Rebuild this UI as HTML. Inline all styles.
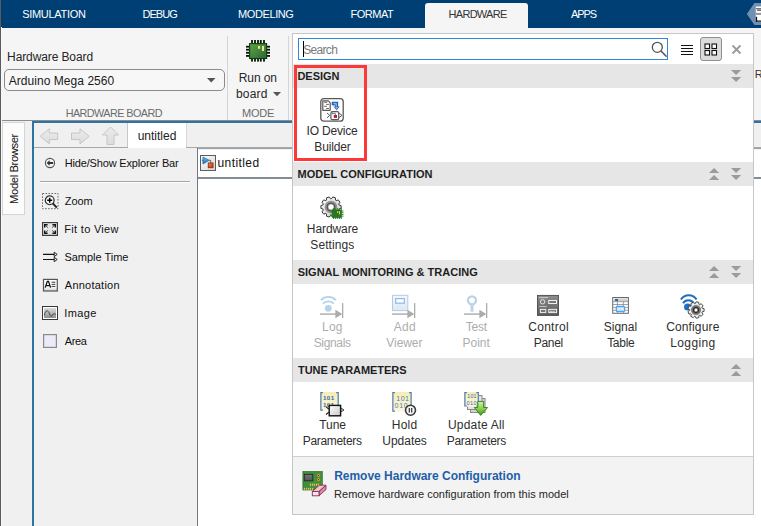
<!DOCTYPE html>
<html><head><meta charset="utf-8"><style>
html,body{margin:0;padding:0;}
body{width:761px;height:526px;overflow:hidden;position:relative;font-family:"Liberation Sans",sans-serif;}
body>div,body>svg{position:absolute;}
.t{white-space:nowrap;line-height:1;}
</style></head><body>
<div style="left:0px;top:0px;width:761px;height:526px;background:#f5f5f5"></div>
<div style="left:0px;top:0px;width:761px;height:28px;background:#003f74"></div>
<div style="left:425px;top:3px;width:103px;height:25px;background:#f5f5f5;border-radius:3px 3px 0 0"></div>
<div class="t" style="left:22.16px;top:8.59px;font-size:11px;letter-spacing:-0.303px;color:#fff;">SIMULATION</div>
<div class="t" style="left:142.47px;top:8.59px;font-size:11px;letter-spacing:-0.957px;color:#fff;">DEBUG</div>
<div class="t" style="left:238.07px;top:8.59px;font-size:11px;letter-spacing:-0.403px;color:#fff;">MODELING</div>
<div class="t" style="left:350.57px;top:8.59px;font-size:11px;letter-spacing:-0.504px;color:#fff;">FORMAT</div>
<div class="t" style="left:448.57px;top:8.59px;font-size:11px;letter-spacing:-0.718px;color:#333;">HARDWARE</div>
<div class="t" style="left:570.97px;top:8.59px;font-size:11px;letter-spacing:-1.102px;color:#fff;">APPS</div>
<svg style="left:745px;top:0px" width="16" height="28" viewBox="0 0 16 28"><polygon points="1.8,14 9.5,3 16,3 16,25 9.5,25" fill="#6f90b2"/><rect x="10.8" y="6.5" width="5.2" height="15.2" fill="#fff"/><rect x="10.8" y="8" width="5.2" height="1.2" fill="#777"/><rect x="12" y="9.6" width="4" height="1.1" fill="#333"/><rect x="10.8" y="12.8" width="5.2" height="2.2" fill="#999"/><rect x="10.8" y="16.8" width="1.3" height="4.9" fill="#111"/><rect x="10.8" y="20.5" width="5.2" height="1.2" fill="#111"/></svg>
<div class="t" style="left:7.11px;top:50.84px;font-size:12px;letter-spacing:-0.110px;color:#262626;">Hardware Board</div>
<div style="left:4px;top:69px;width:219px;height:20px;border:1px solid #8a8a8a;border-radius:5px;background:#f7f7f7"></div>
<div class="t" style="left:8.78px;top:74.84px;font-size:12px;letter-spacing:0.044px;color:#1a1a1a;">Arduino Mega 2560</div>
<svg style="left:207px;top:78px" width="9" height="5" viewBox="0 0 9 5"><polygon points="0,0 8.5,0 4.25,4.5" fill="#555"/></svg>
<div class="t" style="left:65.67px;top:108.06px;font-size:10.8px;letter-spacing:-0.554px;color:#6b6b6b;">HARDWARE BOARD</div>
<div style="left:227px;top:36px;width:1px;height:84px;background:#d4d4d4"></div>
<div style="left:288px;top:36px;width:1px;height:84px;background:#d4d4d4"></div>
<svg style="left:242px;top:36px" width="32" height="30" viewBox="0 0 32 30"><g><rect x="9.10" y="4" width="1.8" height="3.2" fill="#071407"/><rect x="9.10" y="22.4" width="1.8" height="3.2" fill="#071407"/><rect x="12.10" y="4" width="1.8" height="3.2" fill="#071407"/><rect x="12.10" y="22.4" width="1.8" height="3.2" fill="#071407"/><rect x="15.10" y="4" width="1.8" height="3.2" fill="#071407"/><rect x="15.10" y="22.4" width="1.8" height="3.2" fill="#071407"/><rect x="17.90" y="4" width="1.8" height="3.2" fill="#071407"/><rect x="17.90" y="22.4" width="1.8" height="3.2" fill="#071407"/><rect x="21.10" y="4" width="1.8" height="3.2" fill="#071407"/><rect x="21.10" y="22.4" width="1.8" height="3.2" fill="#071407"/><rect x="4" y="9.80" width="3.2" height="1.8" fill="#071407"/><rect x="24.8" y="9.80" width="3.2" height="1.8" fill="#071407"/><rect x="4" y="12.80" width="3.2" height="1.8" fill="#071407"/><rect x="24.8" y="12.80" width="3.2" height="1.8" fill="#071407"/><rect x="4" y="15.90" width="3.2" height="1.8" fill="#071407"/><rect x="24.8" y="15.90" width="3.2" height="1.8" fill="#071407"/><rect x="4" y="19.00" width="3.2" height="1.8" fill="#071407"/><rect x="24.8" y="19.00" width="3.2" height="1.8" fill="#071407"/><defs><linearGradient id="cg" x1="0" y1="0" x2="1" y2="1"><stop offset="0" stop-color="#5ea548"/><stop offset="1" stop-color="#2c6634"/></linearGradient></defs><rect x="7.6" y="7.6" width="17" height="14.9" fill="url(#cg)" stroke="#0b3d0b" stroke-width="1.1"/><rect x="16" y="10" width="2.1" height="2.8" fill="#f2e27a"/><rect x="20" y="10" width="2" height="5" fill="#f2e27a"/></g></svg>
<div class="t" style="left:238.81px;top:71.84px;font-size:12px;letter-spacing:-0.115px;color:#262626;">Run on</div>
<div class="t" style="left:236.03px;top:88.04px;font-size:12px;letter-spacing:0.154px;color:#262626;">board</div>
<svg style="left:273px;top:92px" width="9" height="5" viewBox="0 0 9 5"><polygon points="0,0 8,0 4,4.2" fill="#555"/></svg>
<div class="t" style="left:241.97px;top:107.89px;font-size:11px;letter-spacing:-0.239px;color:#6b6b6b;">MODE</div>
<div class="t" style="left:754.87px;top:68.69px;font-size:11px;letter-spacing:0.000px;color:#333;">R</div>
<div style="left:0px;top:120px;width:761px;height:1px;background:#8c8c8c"></div>
<div style="left:0px;top:121px;width:761px;height:405px;background:#f0f0f0"></div>
<div style="left:2px;top:122px;width:23px;height:93px;background:#fcfcfc;border:1px solid #d5d5d5;box-sizing:border-box"></div>
<div class="t" style="left:-21px;top:162.8px;width:70px;height:12px;font-size:11.3px;line-height:12px;letter-spacing:-0.42px;color:#111;transform:rotate(-90deg);text-align:center;white-space:nowrap">Model Browser</div>
<div style="left:32px;top:121px;width:729px;height:2px;background:#2e73a6"></div>
<div style="left:32px;top:121px;width:2px;height:405px;background:#2e73a6"></div>
<div style="left:34px;top:123px;width:727px;height:25px;background:#f0f0f0"></div>
<div style="left:34px;top:147px;width:94px;height:1px;background:#a8a8a8"></div>
<div style="left:186px;top:147px;width:575px;height:1px;background:#a8a8a8"></div>
<div style="left:127px;top:123px;width:1px;height:24px;background:#c8c8c8"></div>
<div style="left:128px;top:123px;width:58px;height:25px;background:#ffffff"></div>
<div style="left:186px;top:123px;width:1px;height:24px;background:#d8d8d8"></div>
<div class="t" style="left:137.63px;top:129.64px;font-size:12px;letter-spacing:0.003px;color:#222;">untitled</div>
<svg style="left:39px;top:128px" width="20" height="17" viewBox="0 0 20 17"><defs><linearGradient id="ag" x1="0" y1="0" x2="0" y2="1"><stop offset="0" stop-color="#ececec"/><stop offset="1" stop-color="#dcdcdc"/></linearGradient></defs><polygon points="1.1,8.3 10.3,0.8 10.3,5 18.7,5 18.7,11.6 10.3,11.6 10.3,15.8" fill="url(#ag)" stroke="#c6c6c6" stroke-width="1"/></svg>
<svg style="left:70px;top:128px" width="20" height="17" viewBox="0 0 20 17"><polygon points="19.2,8.3 10,0.8 10,5 1.5,5 1.5,11.6 10,11.6 10,15.8" fill="url(#ag)" stroke="#c6c6c6" stroke-width="1"/></svg>
<svg style="left:102px;top:126px" width="18" height="20" viewBox="0 0 18 20"><polygon points="8.5,1 16.5,9 12,9 12,18.5 5,18.5 5,9 0.5,9" fill="url(#ag)" stroke="#c6c6c6" stroke-width="1"/></svg>
<div style="left:197px;top:148px;width:1px;height:378px;background:#737982"></div>
<div style="left:198px;top:148px;width:563px;height:378px;background:#ffffff"></div>
<div style="left:198px;top:148px;width:563px;height:1px;background:#9aa0a8"></div>
<div style="left:198px;top:177px;width:563px;height:2px;background:#868c94"></div>
<div style="left:199px;top:149px;width:562px;height:1px;background:#f2f2f2"></div>
<svg style="left:200px;top:155px" width="16" height="16" viewBox="0 0 16 16"><defs><linearGradient id="bg1" x1="0" y1="0" x2="1" y2="1"><stop offset="0" stop-color="#ffffff"/><stop offset="1" stop-color="#d4d4d4"/></linearGradient><linearGradient id="tri" x1="0" y1="0" x2="0" y2="1"><stop offset="0" stop-color="#6cc4f0"/><stop offset="1" stop-color="#1668b8"/></linearGradient><linearGradient id="sq" x1="0" y1="0" x2="1" y2="1"><stop offset="0" stop-color="#f28040"/><stop offset="1" stop-color="#c83410"/></linearGradient></defs><rect x="0.5" y="0.5" width="15" height="15" fill="url(#bg1)" stroke="#5c5c5c"/><path d="M1.8,5.3H3M9.2,5.3H10.7V7.9" fill="none" stroke="#444" stroke-width="0.8"/><polygon points="2.9,1.9 9.4,5.3 2.9,9" fill="url(#tri)" stroke="#1a5a9a" stroke-width="0.6"/><rect x="8.2" y="7.9" width="4.9" height="4.9" fill="url(#sq)" stroke="#7a2008" stroke-width="0.7"/></svg>
<div class="t" style="left:217.53px;top:156.84px;font-size:12px;letter-spacing:0.417px;color:#111;">untitled</div>
<svg style="left:44px;top:157px" width="12" height="12" viewBox="0 0 12 12"><circle cx="6" cy="6" r="4.6" fill="#f4f4f4" stroke="#555" stroke-width="1.1"/><polygon points="2.6,6 5.6,3.3 5.6,5 9.2,5 9.2,7 5.6,7 5.6,8.7" fill="#333"/></svg>
<div class="t" style="left:64.67px;top:157.89px;font-size:11px;letter-spacing:-0.160px;color:#111;">Hide/Show Explorer Bar</div>
<div style="left:40px;top:181px;width:150px;height:1px;background:#a5a5a5"></div>
<div style="left:40px;top:182px;width:150px;height:1px;background:#ffffff"></div>
<div class="t" style="left:64.78px;top:195.69px;font-size:11px;letter-spacing:-0.105px;color:#111;">Zoom</div>
<div class="t" style="left:64.37px;top:223.69px;font-size:11px;letter-spacing:0.293px;color:#111;">Fit to View</div>
<div class="t" style="left:64.46px;top:251.69px;font-size:11px;letter-spacing:-0.017px;color:#111;">Sample Time</div>
<div class="t" style="left:64.87px;top:279.69px;font-size:11px;letter-spacing:0.228px;color:#111;">Annotation</div>
<div class="t" style="left:64.29px;top:307.69px;font-size:11px;letter-spacing:0.375px;color:#111;">Image</div>
<div class="t" style="left:64.87px;top:335.69px;font-size:11px;letter-spacing:-0.420px;color:#111;">Area</div>
<svg style="left:42px;top:193px" width="17" height="17" viewBox="0 0 17 17"><rect x="0.5" y="0.5" width="15.5" height="15.2" fill="none" stroke="#666" stroke-width="1" stroke-dasharray="1.6,1.4"/><circle cx="7.7" cy="7.3" r="4.4" fill="#fafafa" stroke="#333" stroke-width="1.3"/><path d="M5.2,7.3H10.2M7.7,4.8V9.8" stroke="#000" stroke-width="1.5"/><path d="M10.8,10.4L14.8,14.6" stroke="#222" stroke-width="2"/></svg>
<svg style="left:42px;top:222px" width="16" height="14" viewBox="0 0 16 14"><defs><linearGradient id="fg" x1="0" y1="0" x2="1" y2="0"><stop offset="0" stop-color="#f4f4f4"/><stop offset="0.5" stop-color="#e2e2e2"/><stop offset="1" stop-color="#f4f4f4"/></linearGradient></defs><rect x="0.6" y="0.6" width="14.8" height="12.8" fill="url(#fg)" stroke="#3c3c3c" stroke-width="1.2"/><path d="M2.7,5.6V2.7H5.6M10.4,2.7H13.3V5.6M2.7,8.4V11.3H5.6M10.4,11.3H13.3V8.4" fill="none" stroke="#111" stroke-width="1.5"/><path d="M3.2,3.2L5.9,5.6M12.8,3.2L10.1,5.6M3.2,10.8L5.9,8.4M12.8,10.8L10.1,8.4" stroke="#333" stroke-width="0.9"/></svg>
<svg style="left:42px;top:250px" width="16" height="14" viewBox="0 0 16 14"><path d="M1,4.4H13M1,9.5H13" stroke="#111" stroke-width="1.1"/><path d="M12.2,2.2L15.2,4.4L12.2,6.6Z M12.2,7.3L15.2,9.5L12.2,11.7Z" fill="#f0f0f0" stroke="#111" stroke-width="0.9" stroke-linejoin="round"/></svg>
<svg style="left:42px;top:278px" width="16" height="14" viewBox="0 0 16 14"><defs><linearGradient id="ang" x1="0" y1="0" x2="0" y2="1"><stop offset="0.6" stop-color="#fff"/><stop offset="1" stop-color="#d0d0d0"/></linearGradient></defs><rect x="1.5" y="1.4" width="13.8" height="11.6" fill="url(#ang)" stroke="#555" stroke-width="1.2"/><path d="M3.2,9.6L5.3,3.3H6.5L8.6,9.6M4,7.6H7.8" fill="none" stroke="#111" stroke-width="1.3"/><path d="M9.6,4.2H13.4M9.6,6.3H13.4M9.6,8.4H13.4" stroke="#222" stroke-width="0.9"/></svg>
<svg style="left:42px;top:306px" width="16" height="14" viewBox="0 0 16 14"><defs><linearGradient id="img" x1="0" y1="0" x2="0" y2="1"><stop offset="0" stop-color="#dcdcdc"/><stop offset="1" stop-color="#8e8e8e"/></linearGradient></defs><rect x="0.5" y="0.5" width="15" height="13" fill="#fff" stroke="#383838" stroke-width="1"/><rect x="2" y="2" width="12" height="10" fill="url(#img)"/><path d="M2.3,9.5 C3.5,3.5 6,3.5 7.6,8 C8.6,11 9.3,11 10.5,9 C11.5,7.3 12.8,7.3 13.8,8.5" stroke="#3a3a3a" stroke-width="0.9" fill="none"/></svg>
<svg style="left:43px;top:334px" width="14" height="14" viewBox="0 0 14 14"><rect x="0.6" y="0.6" width="12.8" height="12.8" fill="#eaeaf8" stroke="#8a8a8e" stroke-width="1.2"/></svg>
<div style="left:0px;top:0px;width:1px;height:526px;background:#5a5a5a"></div>
<div style="left:1px;top:27px;width:1px;height:499px;background:#f9f9f9"></div>
<div style="left:292px;top:33px;width:462px;height:482px;background:#ffffff;border:1px solid #c6c6c6;box-sizing:border-box"></div>
<div style="left:298px;top:38px;width:370px;height:22px;border:1px solid #2f86dc;box-sizing:border-box;background:#fff"></div>
<div style="left:303px;top:41px;width:1px;height:16px;background:#000"></div>
<div class="t" style="left:303.20px;top:44.04px;font-size:12px;letter-spacing:-0.678px;color:#7a7a7a;">Search</div>
<svg style="left:650px;top:40px" width="17" height="18" viewBox="0 0 17 18"><circle cx="7.3" cy="7.3" r="5" fill="none" stroke="#555" stroke-width="1.3"/><path d="M10.8,10.8L16.6,16.6" stroke="#555" stroke-width="1.5"/></svg>
<svg style="left:680px;top:44px" width="14" height="12" viewBox="0 0 14 12"><path d="M1,1.5H13M1,4.5H13M1,7.5H13M1,10.5H13" stroke="#111" stroke-width="1.2"/></svg>
<div style="left:700px;top:37px;width:22px;height:24px;background:#dcdcdc;border:1px solid #8f8f8f;border-radius:3px;box-sizing:border-box"></div>
<svg style="left:704px;top:43px" width="14" height="13" viewBox="0 0 14 13"><rect x="1" y="1" width="4.5" height="4.5" fill="#fff" stroke="#111" stroke-width="1.1"/><rect x="8" y="1" width="4.5" height="4.5" fill="#fff" stroke="#111" stroke-width="1.1"/><rect x="1" y="7.5" width="4.5" height="4.5" fill="#fff" stroke="#111" stroke-width="1.1"/><rect x="8" y="7.5" width="4.5" height="4.5" fill="#fff" stroke="#111" stroke-width="1.1"/></svg>
<svg style="left:731px;top:44px" width="11" height="11" viewBox="0 0 11 11"><path d="M1.5,1.5L9.5,9.5M9.5,1.5L1.5,9.5" stroke="#9a9a9a" stroke-width="1.8"/></svg>
<div style="left:293px;top:64px;width:460px;height:24px;background:#e6e6e6"></div>
<div class="t" style="left:297.47px;top:70.59px;font-size:11px;letter-spacing:-0.051px;color:#1e1e1e;font-weight:bold;">DESIGN</div>
<svg style="left:731px;top:70px" width="11" height="12" viewBox="0 0 11 12"><polygon points="0,0 10.2,0 5.1,4.9" fill="#9b9b9b"/><polygon points="0,7 10.2,7 5.1,12" fill="#9b9b9b"/></svg>
<div style="left:293px;top:162px;width:460px;height:24px;background:#e6e6e6"></div>
<div class="t" style="left:297.47px;top:168.59px;font-size:11px;letter-spacing:0.025px;color:#1e1e1e;font-weight:bold;">MODEL CONFIGURATION</div>
<svg style="left:709px;top:168px" width="11" height="12" viewBox="0 0 11 12"><polygon points="0,4.9 10.2,4.9 5.1,0" fill="#9b9b9b"/><polygon points="0,12 10.2,12 5.1,7" fill="#9b9b9b"/></svg>
<svg style="left:731px;top:168px" width="11" height="12" viewBox="0 0 11 12"><polygon points="0,0 10.2,0 5.1,4.9" fill="#9b9b9b"/><polygon points="0,7 10.2,7 5.1,12" fill="#9b9b9b"/></svg>
<div style="left:293px;top:260px;width:460px;height:24px;background:#e6e6e6"></div>
<div class="t" style="left:297.67px;top:266.59px;font-size:11px;letter-spacing:0.008px;color:#1e1e1e;font-weight:bold;">SIGNAL MONITORING &amp; TRACING</div>
<svg style="left:709px;top:266px" width="11" height="12" viewBox="0 0 11 12"><polygon points="0,4.9 10.2,4.9 5.1,0" fill="#9b9b9b"/><polygon points="0,12 10.2,12 5.1,7" fill="#9b9b9b"/></svg>
<svg style="left:731px;top:266px" width="11" height="12" viewBox="0 0 11 12"><polygon points="0,0 10.2,0 5.1,4.9" fill="#9b9b9b"/><polygon points="0,7 10.2,7 5.1,12" fill="#9b9b9b"/></svg>
<div style="left:293px;top:358px;width:460px;height:24px;background:#e6e6e6"></div>
<div class="t" style="left:297.98px;top:364.59px;font-size:11px;letter-spacing:-0.043px;color:#1e1e1e;font-weight:bold;">TUNE PARAMETERS</div>
<svg style="left:731px;top:364px" width="11" height="12" viewBox="0 0 11 12"><polygon points="0,4.9 10.2,4.9 5.1,0" fill="#9b9b9b"/><polygon points="0,12 10.2,12 5.1,7" fill="#9b9b9b"/></svg>
<div class="t" style="left:306.55px;top:125.34px;font-size:12px;letter-spacing:-0.181px;color:#2e2e2e;">IO Device</div>
<div class="t" style="left:314.31px;top:141.14px;font-size:12px;letter-spacing:-0.158px;color:#2e2e2e;">Builder</div>
<div style="left:294px;top:65px;width:73px;height:96px;border:3px solid #fc3838;box-sizing:border-box"></div>
<svg style="left:319px;top:97px" width="26" height="26" viewBox="0 0 26 26"><rect x="1.8" y="1.6" width="22.4" height="22.6" rx="3" fill="#fff" stroke="#585858" stroke-width="1.3"/><path d="M3.8,3.8H9.3L11.2,5.8V13.3H3.8Z" fill="#fff" stroke="#5a5a5a" stroke-width="1.2" stroke-linejoin="round"/><path d="M5.2,5.3H8.2M7.2,7.4H9.9M5.2,9.3H8M7.2,11.5H9.9" stroke="#555" stroke-width="0.9"/><path d="M13.9,8.2V5.9H18V10.2" fill="none" stroke="#2262b8" stroke-width="2.3"/><path d="M14.6,7.9H16.8V10.8" fill="none" stroke="#2262b8" stroke-width="1.2"/><path d="M14.4,6.4H17.3V10.2" fill="none" stroke="#b8dcf6" stroke-width="0.8"/><polygon points="14.4,9.4 20.8,9.4 17.6,13.2" fill="#2a6cc0"/><polygon points="16,10.2 19.2,10.2 17.6,12" fill="#9ccaf0"/><rect x="11.9" y="14.6" width="7.9" height="8.1" rx="1.5" fill="#fff" stroke="#585858" stroke-width="1.2"/><polyline points="8,16 10.8,18.4 8,20.8" fill="none" stroke="#5a5a5a" stroke-width="1"/><polygon points="19.8,15.9 23,18.4 19.8,20.8" fill="#fff" stroke="#5a5a5a" stroke-width="1"/><polygon points="13.1,15.2 15.2,16.4 13.1,17.6" fill="#2262b8"/><path d="M15,16.4H16.4V18" stroke="#444" stroke-width="0.7" fill="none"/><rect x="14.8" y="18" width="3.2" height="2.9" fill="#c0182a"/></svg>
<div class="t" style="left:306.81px;top:223.34px;font-size:12px;letter-spacing:-0.076px;color:#2e2e2e;">Hardware</div>
<div class="t" style="left:310.30px;top:239.14px;font-size:12px;letter-spacing:0.092px;color:#2e2e2e;">Settings</div>
<svg style="left:320px;top:196px" width="24" height="24" viewBox="0 0 24 24"><defs><radialGradient id="gr" cx="0.5" cy="0.5" r="0.5"><stop offset="0" stop-color="#222"/><stop offset="0.6" stop-color="#555"/><stop offset="1" stop-color="#bbb"/></radialGradient><linearGradient id="gb" x1="0" y1="0" x2="1" y2="1"><stop offset="0" stop-color="#fafafa"/><stop offset="1" stop-color="#cfcfcf"/></linearGradient></defs><polygon points="18.92,8.89 21.10,9.58 21.10,12.42 18.92,13.11 18.65,13.95 20.01,15.79 18.33,18.09 16.17,17.36 15.45,17.89 15.47,20.17 12.77,21.05 11.44,19.19 10.56,19.19 9.23,21.05 6.53,20.17 6.55,17.89 5.83,17.36 3.67,18.09 1.99,15.79 3.35,13.95 3.08,13.11 0.90,12.42 0.90,9.58 3.08,8.89 3.35,8.05 1.99,6.21 3.67,3.91 5.83,4.64 6.55,4.11 6.53,1.83 9.23,0.95 10.56,2.81 11.44,2.81 12.77,0.95 15.47,1.83 15.45,4.11 16.17,4.64 18.33,3.91 20.01,6.21 18.65,8.05" fill="url(#gb)" stroke="#3a3a3a" stroke-width="1"/><circle cx="11" cy="11" r="6.6" fill="url(#gr)"/><circle cx="11" cy="11" r="5.2" fill="none" stroke="#999" stroke-width="0.8"/><circle cx="11" cy="11" r="3.2" fill="#fff" stroke="#444" stroke-width="0.6"/><g transform="translate(10.5,12)"><rect x="2.40" y="0" width="1.1" height="2.2" fill="#2f8f2a"/><rect x="2.40" y="8.8" width="1.1" height="2.2" fill="#2f8f2a"/><rect x="4.35" y="0" width="1.1" height="2.2" fill="#2f8f2a"/><rect x="4.35" y="8.8" width="1.1" height="2.2" fill="#2f8f2a"/><rect x="6.30" y="0" width="1.1" height="2.2" fill="#2f8f2a"/><rect x="6.30" y="8.8" width="1.1" height="2.2" fill="#2f8f2a"/><rect x="8.25" y="0" width="1.1" height="2.2" fill="#2f8f2a"/><rect x="8.25" y="8.8" width="1.1" height="2.2" fill="#2f8f2a"/><rect x="10.20" y="0" width="1.1" height="2.2" fill="#2f8f2a"/><rect x="10.20" y="8.8" width="1.1" height="2.2" fill="#2f8f2a"/><rect x="0" y="2.50" width="2.2" height="1" fill="#2f8f2a"/><rect x="10.8" y="2.50" width="2.2" height="1" fill="#2f8f2a"/><rect x="0" y="4.20" width="2.2" height="1" fill="#2f8f2a"/><rect x="10.8" y="4.20" width="2.2" height="1" fill="#2f8f2a"/><rect x="0" y="5.90" width="2.2" height="1" fill="#2f8f2a"/><rect x="10.8" y="5.90" width="2.2" height="1" fill="#2f8f2a"/><rect x="0" y="7.60" width="2.2" height="1" fill="#2f8f2a"/><rect x="10.8" y="7.60" width="2.2" height="1" fill="#2f8f2a"/><rect x="2" y="2" width="9" height="7.5" fill="#2b7526" stroke="#1f5a1c" stroke-width="0.5"/><rect x="6.6" y="3.2" width="1.1" height="1.8" fill="#f0d040"/><rect x="8.4" y="3.2" width="1.1" height="3.2" fill="#f0d040"/></g></svg>
<div class="t" style="left:322.11px;top:321.34px;font-size:12px;letter-spacing:0.202px;color:#adadad;">Log</div>
<div class="t" style="left:313.70px;top:337.14px;font-size:12px;letter-spacing:-0.343px;color:#adadad;">Signals</div>
<div class="t" style="left:393.68px;top:321.34px;font-size:12px;letter-spacing:0.296px;color:#adadad;">Add</div>
<div class="t" style="left:386.37px;top:337.14px;font-size:12px;letter-spacing:-0.088px;color:#adadad;">Viewer</div>
<div class="t" style="left:465.67px;top:321.34px;font-size:12px;letter-spacing:-0.210px;color:#adadad;">Test</div>
<div class="t" style="left:462.61px;top:337.14px;font-size:12px;letter-spacing:-0.059px;color:#adadad;">Point</div>
<div class="t" style="left:528.24px;top:321.34px;font-size:12px;letter-spacing:0.287px;color:#2e2e2e;">Control</div>
<div class="t" style="left:533.81px;top:337.14px;font-size:12px;letter-spacing:-0.319px;color:#2e2e2e;">Panel</div>
<div class="t" style="left:603.80px;top:321.34px;font-size:12px;letter-spacing:-0.008px;color:#2e2e2e;">Signal</div>
<div class="t" style="left:607.17px;top:337.14px;font-size:12px;letter-spacing:-0.291px;color:#2e2e2e;">Table</div>
<div class="t" style="left:666.14px;top:321.34px;font-size:12px;letter-spacing:0.145px;color:#2e2e2e;">Configure</div>
<div class="t" style="left:670.21px;top:337.14px;font-size:12px;letter-spacing:0.392px;color:#2e2e2e;">Logging</div>
<svg style="left:316px;top:290px" width="30" height="30" viewBox="0 0 30 30"><path d="M4.9,10 A10.6,10.6 0 0 1 19.9,10" fill="none" stroke="#b3d2ec" stroke-width="1.9"/><path d="M7,13.6 A7.6,7.6 0 0 1 17.8,13.6" fill="none" stroke="#b3d2ec" stroke-width="1.9"/><circle cx="12.3" cy="18.3" r="3.4" fill="#b5d3ee"/><path d="M4,24.1H20" stroke="#ababab" stroke-width="1.4"/><polygon points="19.4,19.8 26.3,24.1 19.4,28.3" fill="#ababab"/><rect x="26" y="13.1" width="1.3" height="15" fill="#ababab"/></svg>
<svg style="left:388px;top:290px" width="30" height="30" viewBox="0 0 30 30"><defs><linearGradient id="vg" x1="0" y1="0" x2="0" y2="1"><stop offset="0" stop-color="#f4f8fc"/><stop offset="1" stop-color="#dce8f4"/></linearGradient></defs><rect x="4.5" y="5.3" width="15.3" height="15.3" fill="url(#vg)" stroke="#b0cce6" stroke-width="1"/><rect x="7.7" y="8.6" width="8.6" height="4.6" fill="#fff" stroke="#98bee4" stroke-width="1.3"/><path d="M4,24.1H20" stroke="#ababab" stroke-width="1.4"/><polygon points="19.4,19.8 26.3,24.1 19.4,28.3" fill="#ababab"/><rect x="26" y="13.1" width="1.3" height="15" fill="#ababab"/></svg>
<svg style="left:460px;top:290px" width="30" height="30" viewBox="0 0 30 30"><circle cx="12" cy="10.3" r="4" fill="#fff" stroke="#b8d2e8" stroke-width="2.3"/><rect x="10.5" y="14.3" width="3" height="7.4" fill="#bcd4ea"/><path d="M4,24.1H20" stroke="#ababab" stroke-width="1.4"/><polygon points="19.4,19.8 26.3,24.1 19.4,28.3" fill="#ababab"/><rect x="26" y="13.1" width="1.3" height="15" fill="#ababab"/></svg>
<svg style="left:532px;top:290px" width="32" height="30" viewBox="0 0 32 30"><defs><linearGradient id="cpg" x1="0" y1="0" x2="0" y2="1"><stop offset="0" stop-color="#8c8c8c"/><stop offset="1" stop-color="#5a5a5a"/></linearGradient></defs><rect x="5.5" y="5.4" width="21" height="20" fill="url(#cpg)" stroke="#4a4a4a" stroke-width="0.9"/><path d="M7.2,7.6H16M7.2,16.6H14.8" stroke="#e0e0e0" stroke-width="0.8"/><circle cx="10.6" cy="11.8" r="2.2" fill="none" stroke="#e6e6e6" stroke-width="1"/><rect x="16.7" y="10.5" width="7.8" height="3" fill="#777" stroke="#eee" stroke-width="1"/><rect x="8.4" y="19.4" width="5.4" height="3.2" fill="#777" stroke="#eee" stroke-width="1"/><rect x="16.7" y="19.4" width="7.8" height="3.2" fill="#777" stroke="#eee" stroke-width="1"/><path d="M18.2,22.4V21.2H19.6V22.4M20.8,22.4V21.2H22.2V22.4" fill="none" stroke="#eee" stroke-width="0.7"/></svg>
<svg style="left:604px;top:290px" width="32" height="30" viewBox="0 0 32 30"><defs><linearGradient id="sth" x1="0" y1="0" x2="0" y2="1"><stop offset="0" stop-color="#e4e4e4"/><stop offset="1" stop-color="#c4c4c4"/></linearGradient></defs><rect x="8.7" y="7.5" width="15.7" height="15.8" fill="#fff" stroke="#6a6a6a" stroke-width="1"/><rect x="9.2" y="8" width="14.7" height="3.4" fill="url(#sth)"/><rect x="11.1" y="9.1" width="2.9" height="1.8" fill="#1456b8"/><path d="M9,11.7H24.2M9,14.5H24.2M9,17.4H24.2M9,20.3H24.2M13.4,11.7V23M19.4,11.7V23" stroke="#8c8c8c" stroke-width="0.8"/><rect x="12.3" y="16.5" width="8.3" height="5" rx="1" fill="#dbeafa" stroke="#4da2f2" stroke-width="1.3"/></svg>
<svg style="left:676px;top:290px" width="32" height="32" viewBox="0 0 32 32"><path d="M4.9,9.6 A9.2,9.2 0 0 1 20.6,9.6" fill="none" stroke="#1f6fbb" stroke-width="2"/><path d="M7,13.2 A6.4,6.4 0 0 1 17.8,13.2" fill="none" stroke="#1f6fbb" stroke-width="2"/><circle cx="11.6" cy="17" r="3.6" fill="#1f74c4"/><polygon points="26.11,18.11 28.08,18.61 28.08,21.39 26.11,21.89 25.90,22.48 27.08,24.13 25.30,26.26 23.47,25.38 22.92,25.69 22.77,27.72 20.04,28.20 19.20,26.35 18.58,26.24 17.16,27.69 14.76,26.31 15.30,24.35 14.90,23.87 12.88,24.07 11.93,21.46 13.61,20.31 13.61,19.69 11.93,18.54 12.88,15.93 14.90,16.13 15.30,15.65 14.76,13.69 17.16,12.31 18.58,13.76 19.20,13.65 20.04,11.80 22.77,12.28 22.92,14.31 23.47,14.62 25.30,13.74 27.08,15.87 25.90,17.52" fill="#f0f0f0" stroke="#3a3a3a" stroke-width="0.9"/><defs><radialGradient id="gr2" cx="0.5" cy="0.5" r="0.5"><stop offset="0.3" stop-color="#111"/><stop offset="0.75" stop-color="#555"/><stop offset="1" stop-color="#aaa"/></radialGradient></defs><circle cx="20" cy="20" r="5.2" fill="url(#gr2)"/><circle cx="20" cy="20" r="3.9" fill="none" stroke="#999" stroke-width="0.6"/><circle cx="20" cy="20" r="1.9" fill="#fff" stroke="#333" stroke-width="0.5"/></svg>
<div class="t" style="left:319.27px;top:419.34px;font-size:12px;letter-spacing:-0.045px;color:#2e2e2e;">Tune</div>
<div class="t" style="left:302.81px;top:435.14px;font-size:12px;letter-spacing:-0.324px;color:#2e2e2e;">Parameters</div>
<div class="t" style="left:391.81px;top:419.34px;font-size:12px;letter-spacing:0.204px;color:#2e2e2e;">Hold</div>
<div class="t" style="left:382.35px;top:435.14px;font-size:12px;letter-spacing:-0.031px;color:#2e2e2e;">Updates</div>
<div class="t" style="left:447.95px;top:419.34px;font-size:12px;letter-spacing:0.201px;color:#2e2e2e;">Update All</div>
<div class="t" style="left:446.71px;top:435.14px;font-size:12px;letter-spacing:-0.264px;color:#2e2e2e;">Parameters</div>
<svg style="left:316px;top:388px" width="32" height="32" viewBox="0 0 32 32"><defs><linearGradient id="yg" x1="0" y1="0" x2="0" y2="1"><stop offset="0" stop-color="#f6ecb4"/><stop offset="1" stop-color="#fbf6dc"/></linearGradient><linearGradient id="bkg" x1="0" y1="0" x2="1" y2="1"><stop offset="0" stop-color="#ffffff"/><stop offset="1" stop-color="#c8c8c8"/></linearGradient><linearGradient id="ga" x1="0" y1="0" x2="0" y2="1"><stop offset="0" stop-color="#d8f0b0"/><stop offset="0.5" stop-color="#8fd050"/><stop offset="1" stop-color="#3c9a1c"/></linearGradient></defs><rect x="4.3" y="4" width="18.5" height="18.8" fill="url(#yg)"/><path d="M6.9,4.6H4.8999999999999995V22.2H6.9M20.2,4.6H22.2V22.2H20.2" fill="none" stroke="#4c7cb6" stroke-width="1.2"/><text x="7" y="11.7" font-family="Liberation Sans" font-weight="bold" font-size="6.2" letter-spacing="0.4" fill="#3a6aaa">101</text><text x="7" y="19" font-family="Liberation Sans" font-weight="bold" font-size="6.2" letter-spacing="0.4" fill="#3a6aaa">101</text><path d="M10,18.9L12.8,21M10,26.5L12.8,24.2" stroke="#222" stroke-width="1.1"/><rect x="13.2" y="17.4" width="11.4" height="10.4" fill="url(#bkg)" stroke="#111" stroke-width="1.4"/><polygon points="25.1,20.2 28,22 25.1,23.8" fill="#fff" stroke="#222" stroke-width="0.9"/></svg>
<svg style="left:388px;top:388px" width="32" height="32" viewBox="0 0 32 32"><rect x="4.3" y="4" width="19.4" height="19.7" fill="url(#yg)"/><path d="M6.9,4.6H4.8999999999999995V23.099999999999998H6.9M21.099999999999998,4.6H23.099999999999998V23.099999999999998H21.099999999999998" fill="none" stroke="#4c7cb6" stroke-width="1.2"/><text x="8.3" y="12.8" font-family="Liberation Sans" font-size="7" letter-spacing="0.5" fill="#4a7ab8">101</text><text x="6.6" y="20.4" font-family="Liberation Sans" font-size="7" letter-spacing="0.7" fill="#4a7ab8">010</text><circle cx="22.5" cy="22.2" r="5" fill="#f4f4f4" stroke="#3c3c3c" stroke-width="1.6"/><path d="M21.3,20V24.4M23.7,20V24.4" stroke="#222" stroke-width="1.1"/></svg>
<svg style="left:460px;top:388px" width="32" height="32" viewBox="0 0 32 32"><rect x="10.5" y="10.5" width="14.5" height="14" fill="#d4d4d4" stroke="#8a8a8a" stroke-width="1"/><rect x="7.5" y="7.5" width="14.5" height="14" fill="#e4e4e4" stroke="#8a8a8a" stroke-width="1"/><rect x="4.3" y="4" width="14.6" height="14.6" fill="url(#yg)"/><path d="M6.9,4.6H4.8999999999999995V18.0H6.9M16.299999999999997,4.6H18.299999999999997V18.0H16.299999999999997" fill="none" stroke="#4c7cb6" stroke-width="1.2"/><text x="7.3" y="9.8" font-family="Liberation Sans" font-size="5.2" letter-spacing="0.2" fill="#3a6aaa">101</text><text x="6.6" y="16.7" font-family="Liberation Sans" font-size="5.6" letter-spacing="0.3" fill="#3a6aaa">010</text><polygon points="17.8,13.4 23.6,13.4 23.6,19.5 27.6,19.5 20.7,27.4 14.3,19.5 17.8,19.5" fill="url(#ga)" stroke="#2f7f18" stroke-width="0.9" stroke-linejoin="round"/></svg>
<div style="left:293px;top:456px;width:460px;height:1px;background:#d0d0d0"></div>
<div style="left:293px;top:457px;width:460px;height:57px;background:#f3f3f3"></div>
<div class="t" style="left:334.13px;top:470.04px;font-size:12px;letter-spacing:-0.010px;color:#1f5fa8;font-weight:bold;">Remove Hardware Configuration</div>
<div class="t" style="left:334.07px;top:488.89px;font-size:11px;letter-spacing:0.013px;color:#262626;">Remove hardware configuration from this model</div>
<svg style="left:298px;top:466px" width="32" height="32" viewBox="0 0 32 32"><defs><linearGradient id="chg" x1="0" y1="0" x2="0" y2="1"><stop offset="0" stop-color="#777"/><stop offset="1" stop-color="#555"/></linearGradient></defs><rect x="4.9" y="5.5" width="19.4" height="18.5" fill="#3f8f3c" stroke="#2c6a2a" stroke-width="0.7"/><rect x="6.3" y="8.3" width="8.5" height="6.5" fill="url(#chg)" stroke="#222" stroke-width="0.8"/><circle cx="20.7" cy="9.4" r="1.6" fill="#e0b848" stroke="#8a6a20" stroke-width="0.4"/><circle cx="20.7" cy="9.4" r="0.6" fill="#222"/><circle cx="20.7" cy="13.7" r="1.6" fill="#e0b848" stroke="#8a6a20" stroke-width="0.4"/><circle cx="20.7" cy="13.7" r="0.6" fill="#222"/><rect x="11.9" y="17.6" width="1.2" height="2.2" fill="#e8c050"/><rect x="14.0" y="17.6" width="1.2" height="2.2" fill="#e8c050"/><rect x="15.9" y="17.6" width="1.2" height="2.2" fill="#e8c050"/><rect x="18.0" y="17.6" width="1.2" height="2.2" fill="#e8c050"/><rect x="19.9" y="17.6" width="1.2" height="2.2" fill="#e8c050"/><rect x="5.8" y="21.9" width="1.2" height="1.9" fill="#e8c050"/><rect x="7.9" y="21.9" width="1.2" height="1.9" fill="#e8c050"/><rect x="10.0" y="21.9" width="1.2" height="1.9" fill="#e8c050"/><rect x="11.9" y="21.9" width="1.2" height="1.9" fill="#e8c050"/><rect x="14.0" y="21.9" width="1.2" height="1.9" fill="#e8c050"/><polygon points="14.3,25.5 21,25.5 28,19.2 21.3,19.2" fill="#efc4d0" stroke="#8a3050" stroke-width="0.9" stroke-linejoin="round"/><polygon points="21,25.5 28,19.2 28,23.5 21,29.8" fill="#d88aa0" stroke="#8a3050" stroke-width="0.9" stroke-linejoin="round"/><rect x="14.3" y="25.5" width="6.7" height="4.3" fill="#f8e4ea" stroke="#8a3050" stroke-width="0.9"/></svg>
</body></html>
